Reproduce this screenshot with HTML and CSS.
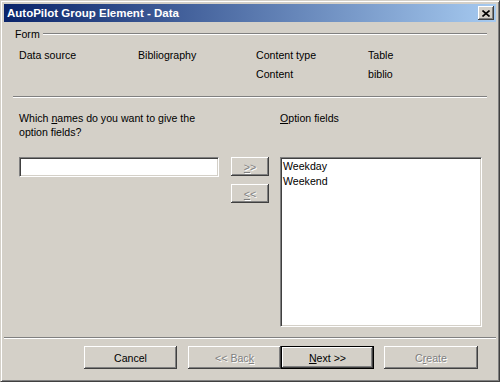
FILE: index.html
```html
<!DOCTYPE html>
<html lang="en">
<head>
    <meta charset="UTF-8">
    <title>AutoPilot Group Element - Data</title>
    <link rel="stylesheet" href="styles.css">
</head>
<body>

<div class="window">
    <div class="titlebar">
        <span class="title">AutoPilot Group Element - Data</span>
        <span class="close">
            <svg width="8" height="7" viewBox="0 0 8 7">
                <path d="M0.5 0.5 L7.5 6.5 M7.5 0.5 L0.5 6.5" stroke="#000" stroke-width="1.6" fill="none"/>
            </svg>
        </span>
    </div>

    <div class="content">
        <div class="group-head"><span>Form</span><span class="rule"></span></div>
        <div class="info">
            <span>Data source</span>
            <span>Bibliography</span>
            <span>Content type</span>
            <span>Table</span>
            <span></span>
            <span></span>
            <span>Content</span>
            <span>biblio</span>
        </div>

        <div class="sep"></div>

        <div class="fields">
            <p class="question">Which <u>n</u>ames do you want to give the option fields?</p>
            <span></span>
            <p class="label"><u>O</u>ption fields</p>

            <div class="entry"></div>
            <div class="movers">
                <button class="btn small disabled"><u>&gt;</u>&gt;</button>
                <button class="btn small disabled"><u>&lt;</u>&lt;</button>
            </div>
            <div class="listbox">
                <div class="item">Weekday</div>
                <div class="item">Weekend</div>
            </div>
        </div>
    </div>

    <div class="footer-sep"></div>

    <div class="buttons">
        <button class="btn">Cancel</button>
        <button class="btn disabled">&lt;&lt; Bac<u>k</u></button>
        <button class="btn default"><u>N</u>ext &gt;&gt;</button>
        <button class="btn disabled">C<u>r</u>eate</button>
    </div>
</div>

</body>
</html>
```

FILE: styles.css
```css
/* classic dialog look */
body {
    margin: 0;
    padding: 0;
    font-family: "Liberation Sans", Arial, sans-serif;
    font-size: 10.6px;
    color: #000;
    background-color: #d4d0c8;
}
.window {
    width: 500px;
    height: 382px;
    box-sizing: border-box;
    background-color: #d4d0c8;
    border: 1px solid;
    border-color: #d4d0c8 #404040 #404040 #d4d0c8;
    box-shadow: inset 1px 1px #fff, inset -1px -1px #808080;
    padding: 3px;
}
.titlebar {
    height: 18px;
    display: flex;
    align-items: center;
    justify-content: space-between;
    padding: 0 2px 0 3px;
    background: linear-gradient(to right, #0a246a, #a6caf0);
}
.title {
    color: #fff;
    font-weight: bold;
    font-size: 11.5px;
}
.close {
    width: 16px;
    height: 14px;
    box-sizing: border-box;
    display: flex;
    align-items: center;
    justify-content: center;
    background-color: #d4d0c8;
    box-shadow: inset -1px -1px #404040, inset 1px 1px #fff, inset -2px -2px #808080;
}
.content {
    padding: 5px 9px 0 11px;
}
.group-head {
    display: flex;
    align-items: center;
    gap: 3px;
    line-height: 14px;
}
.rule {
    flex: 1;
    border-top: 1px solid #808080;
    border-bottom: 1px solid #fff;
}
.info {
    display: grid;
    grid-template-columns: 119px 118px 112px auto;
    row-gap: 5px;
    line-height: 14px;
    margin: 7px 0 0 4px;
}
.sep {
    margin: 15px 0 0 -2px;
    border-top: 1px solid #808080;
    border-bottom: 1px solid #fff;
}
.fields {
    display: grid;
    grid-template-columns: 200px 38px 201px;
    column-gap: 12px;
    row-gap: 18px;
    margin: 13px 0 0 4px;
    line-height: 14px;
}
.fields p {
    margin: 0;
}
.label {
    margin-left: -1px !important;
}
.entry {
    height: 20px;
    box-sizing: border-box;
    background-color: #fff;
    border: 1px solid;
    border-color: #808080 #fff #fff #808080;
    box-shadow: inset 1px 1px #404040, inset -1px -1px #d4d0c8;
}
.movers {
    display: flex;
    flex-direction: column;
    gap: 8px;
}
.listbox {
    height: 170px;
    margin-left: -1px;
    box-sizing: border-box;
    background-color: #fff;
    border: 1px solid;
    border-color: #808080 #fff #fff #808080;
    box-shadow: inset 1px 1px #404040, inset -1px -1px #d4d0c8;
    padding: 1px 2px;
}
.item {
    line-height: 15px;
}
.footer-sep {
    margin-top: 10px;
    border-top: 1px solid #808080;
    border-bottom: 1px solid #fff;
}
.buttons {
    display: flex;
    margin-top: 7px;
    padding-left: 80px;
}
.btn {
    width: 93px;
    height: 23px;
    padding: 0;
    font-family: inherit;
    font-size: 10.6px;
    color: #000;
    background-color: #d4d0c8;
    border: none;
    box-shadow: inset -1px -1px #404040, inset 1px 1px #fff, inset -2px -2px #808080;
}
.btn.small {
    width: 38px;
    height: 19px;
}
.buttons .btn:first-child {
    margin-right: 11px;
}
.buttons .btn:last-child {
    margin-left: 10px;
    width: 94px;
}
.btn.disabled {
    color: #808080;
    text-shadow: 1px 1px #fff;
}
.btn.default {
    border: 1px solid #000;
    box-shadow: inset -1px -1px #404040, inset 1px 1px #fff, inset -2px -2px #808080;
}
```
